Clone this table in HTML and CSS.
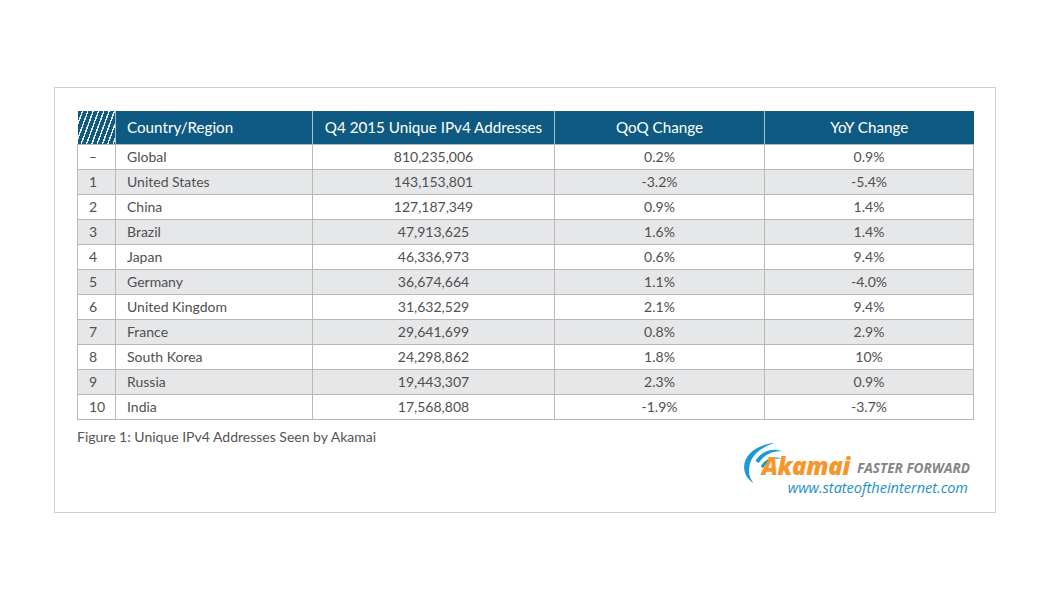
FILE: index.html
```html
<!DOCTYPE html>
<html>
<head>
<meta charset="utf-8">
<link rel="stylesheet" href="styles.css">
</head>
<body>
<div class="frame">
  <table class="data">
    <colgroup>
      <col class="c1"><col class="c2"><col class="c3"><col class="c4"><col class="c5">
    </colgroup>
    <thead>
      <tr>
        <th class="hatch"></th>
        <th class="left">Country/Region</th>
        <th>Q4 2015 Unique IPv4 Addresses</th>
        <th>QoQ Change</th>
        <th>YoY Change</th>
      </tr>
    </thead>
    <tbody>
      <tr><td class="rank">–</td><td class="left">Global</td><td>810,235,006</td><td>0.2%</td><td>0.9%</td></tr>
      <tr class="alt"><td class="rank">1</td><td class="left">United States</td><td>143,153,801</td><td>-3.2%</td><td>-5.4%</td></tr>
      <tr><td class="rank">2</td><td class="left">China</td><td>127,187,349</td><td>0.9%</td><td>1.4%</td></tr>
      <tr class="alt"><td class="rank">3</td><td class="left">Brazil</td><td>47,913,625</td><td>1.6%</td><td>1.4%</td></tr>
      <tr><td class="rank">4</td><td class="left">Japan</td><td>46,336,973</td><td>0.6%</td><td>9.4%</td></tr>
      <tr class="alt"><td class="rank">5</td><td class="left">Germany</td><td>36,674,664</td><td>1.1%</td><td>-4.0%</td></tr>
      <tr><td class="rank">6</td><td class="left">United Kingdom</td><td>31,632,529</td><td>2.1%</td><td>9.4%</td></tr>
      <tr class="alt"><td class="rank">7</td><td class="left">France</td><td>29,641,699</td><td>0.8%</td><td>2.9%</td></tr>
      <tr><td class="rank">8</td><td class="left">South Korea</td><td>24,298,862</td><td>1.8%</td><td>10%</td></tr>
      <tr class="alt"><td class="rank">9</td><td class="left">Russia</td><td>19,443,307</td><td>2.3%</td><td>0.9%</td></tr>
      <tr><td class="rank">10</td><td class="left">India</td><td>17,568,808</td><td>-1.9%</td><td>-3.7%</td></tr>
    </tbody>
  </table>
  <div class="caption">Figure 1: Unique IPv4 Addresses Seen by Akamai</div>
  <div class="brand">
    <div class="brand-line">
      <svg class="swoosh" width="44" height="42" viewBox="0 0 42 40">
        <path d="M31 1 C15 2 2 12 2 24 C2 31 6 36 11 39 C7 34 6 29 7 24 C8 13 18 5 31 1 Z" fill="#1a9bd7"/>
        <path d="M13 18 C18 9 29 5 39 9 C30 8 21 12 16 20 Z" fill="#1a9bd7"/>
        <path d="M18 23 C22 16 31 13 38 16 C31 15 24 18 20 25 Z" fill="#1a9bd7"/>
      </svg>
      <span class="akamai">Akamai</span>
      <span class="tagline">FASTER FORWARD</span>
    </div>
    <div class="url">www.stateoftheinternet.com</div>
  </div>
</div>
</body>
</html>
```

FILE: styles.css
```css
html, body {
  margin: 0;
  padding: 0;
  background: #fff;
}
body {
  font-family: Lato, "Noto Sans", sans-serif;
  color: #4a4a4a;
  padding: 87px 0 0 54px;
}
.frame {
  width: 942px;
  height: 426px;
  border: 1px solid #cfcfcf;
  padding: 23px 0 0 22px;
  box-sizing: border-box;
  display: flex;
  flex-direction: column;
}
.data {
  border-collapse: collapse;
  width: 896px;
  table-layout: fixed;
  font-size: 14px;
}
.c1 { width: 38px; }
.c2 { width: 197px; }
.c3 { width: 242px; }
.c4 { width: 210px; }
.c5 { width: 209px; }
.data th {
  background: #0f5a82;
  color: #fff;
  font-weight: 400;
  font-size: 15.2px;
  height: 33px;
  padding: 0;
  text-align: center;
  border-left: 1px solid #a8c0d0;
  box-sizing: border-box;
}
.data th:first-child { border-left: none; }
.data th.hatch {
  background: repeating-linear-gradient(110deg, #0f5a82 0 3.6px, #e6eef3 3.6px 5px);
}
.data th.left, .data td.left {
  text-align: left;
  padding-left: 11px;
}
.data td {
  height: 25px;
  padding: 0;
  text-align: center;
  border: 1px solid #b9b9b9;
  color: #505050;
  box-sizing: border-box;
}
.data td.rank {
  text-align: left;
  padding-left: 11px;
}
.data tr.alt td {
  background: #e6e7e8;
}
.caption {
  margin-top: 8px;
  font-size: 14px;
  color: #555;
}
.brand {
  align-self: flex-end;
  margin-right: 25px;
  margin-top: 0;
  display: flex;
  flex-direction: column;
  align-items: flex-end;
}
.brand-line {
  display: flex;
  align-items: flex-end;
  position: relative;
  height: 33px;
}
.swoosh {
  position: absolute;
  left: -20px;
  top: -3px;
}
.akamai {
  font-family: "Open Sans", Lato, sans-serif;
  font-weight: 800;
  font-style: italic;
  font-size: 24px;
  color: #f7962a;
  line-height: 1;
  letter-spacing: -0.3px;
  position: relative;
}
.tagline {
  font-family: "Open Sans", Lato, sans-serif;
  font-weight: 700;
  font-style: italic;
  font-size: 13.6px;
  color: #858585;
  margin-left: 7px;
  line-height: 1;
  padding-bottom: 3px;
}
.url {
  font-family: "Open Sans", Lato, sans-serif;
  font-style: italic;
  font-size: 14.5px;
  color: #1a8fcf;
  margin-top: 0;
  margin-right: 2px;
}
```
